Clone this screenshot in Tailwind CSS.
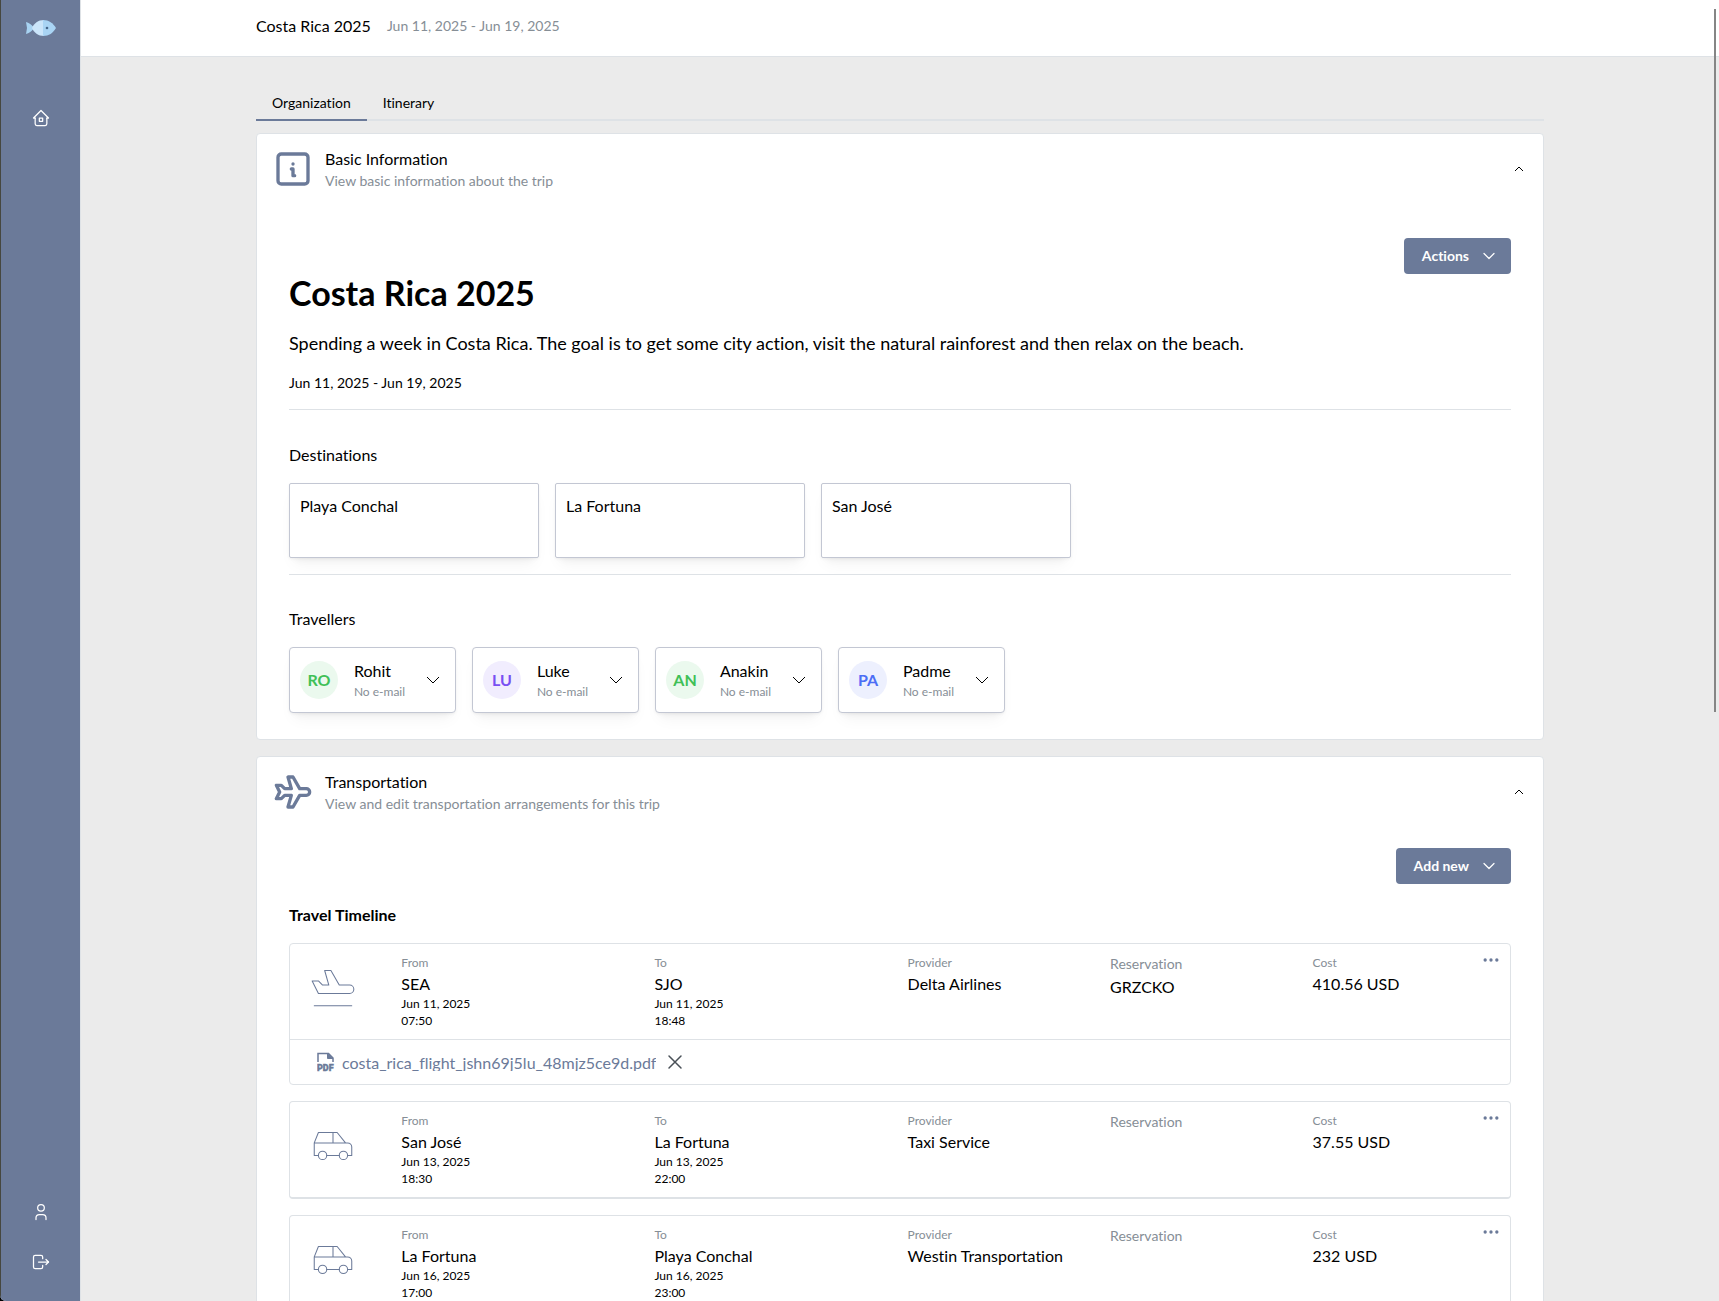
<!DOCTYPE html>
<html lang="en">
<head>
<meta charset="utf-8">
<meta name="viewport" content="width=device-width, initial-scale=1">
<title>Costa Rica 2025</title>
<script src="https://cdn.jsdelivr.net/npm/@tailwindcss/browser@4"></script>
</head>
<body class="bg-black">
<svg class="hidden" aria-hidden="true">
  <symbol id="chevron-down" viewBox="0 0 24 24"><path d="M6 9l6 6l6 -6"/></symbol>
  <symbol id="chevron-up" viewBox="0 0 24 24"><path d="M6 15l6 -6l6 6"/></symbol>
  <symbol id="dots" viewBox="0 0 24 24"><circle cx="5" cy="12" r="1"/><circle cx="12" cy="12" r="1"/><circle cx="19" cy="12" r="1"/></symbol>
  <symbol id="car" viewBox="0 0 24 24"><circle cx="7" cy="17" r="2"/><circle cx="17" cy="17" r="2"/><path d="M5 17h-2v-6l2 -5h9l4 5h1a2 2 0 0 1 2 2v4h-2m-4 0h-6m-6 -6h15m-6 0v-5"/></symbol>
  <symbol id="flight" viewBox="0 0 24 24"><path d="M15 11.085h5a2 2 0 1 1 0 4h-15l-3 -6h3l2 2h3l-2 -7h3l4 7z"/><path d="M3 21h18"/></symbol>
</svg>

<div class="relative flex h-screen overflow-hidden rounded-bl-md bg-[#ebebeb] font-['Lato',sans-serif] text-base leading-6 text-black [font-variant-ligatures:none]">
  <!-- Sidebar -->
  <nav class="flex w-[81px] shrink-0 flex-col items-center border-l border-r border-l-[#46473f] border-r-[#dee2e6] bg-[#6b7a99] text-white">
    <a href="#" aria-label="Travel home" class="mt-4">
      <svg class="h-6 w-8" viewBox="0 0 32 24">
        <path d="M1 6c3 1 5 2 7 4.500v3c-2 2 -4 3.500 -7 4.500l1 -6z" fill="#a8d3f2"/>
        <path d="M7 12c2 -4.500 6 -8 12 -8v16c-6 0 -10 -3.500 -12 -8z" fill="#cbe5fa"/>
        <path d="M18 4c6 0 10 3 13 8c-3 5 -7 8 -13 8z" fill="#a9d4f4"/>
        <circle cx="22" cy="12" r="1.300" fill="#46688c"/>
      </svg>
    </a>
    <a href="#" aria-label="Home" class="mt-[68px]">
      <svg class="size-5 fill-none stroke-current" viewBox="0 0 24 24" stroke-width="1.500" stroke-linecap="round" stroke-linejoin="round"><path d="M5 12H3l9 -9l9 9h-2"/><path d="M5 12v7a2 2 0 0 0 2 2h10a2 2 0 0 0 2 -2v-7"/><path d="M10 12h4v4h-4z"/></svg>
    </a>
    <a href="#" aria-label="Profile" class="mt-auto">
      <svg class="size-5 fill-none stroke-current" viewBox="0 0 24 24" stroke-width="1.500" stroke-linecap="round" stroke-linejoin="round"><circle cx="12" cy="7" r="4"/><path d="M6 21v-2a4 4 0 0 1 4 -4h4a4 4 0 0 1 4 4v2"/></svg>
    </a>
    <a href="#" aria-label="Log out" class="mt-[30px] mb-[29px]">
      <svg class="size-5 fill-none stroke-current" viewBox="0 0 24 24" stroke-width="1.500" stroke-linecap="round" stroke-linejoin="round"><path d="M14 8v-2a2 2 0 0 0 -2 -2h-7a2 2 0 0 0 -2 2v12a2 2 0 0 0 2 2h7a2 2 0 0 0 2 -2v-2"/><path d="M9 12h12l-3 -3"/><path d="M18 15l3 -3"/></svg>
    </a>
  </nav>

  <div class="flex min-w-0 grow flex-col">
    <header class="shrink-0 border-b border-[#dee2e6] bg-white pt-[14px] pb-[18px]">
      <div class="mx-auto flex max-w-[1320px] items-center gap-4 px-4">
        <span>Costa Rica 2025</span>
        <span class="text-sm text-[#868e96]">Jun 11, 2025 - Jun 19, 2025</span>
      </div>
    </header>

    <main class="min-h-0 grow overflow-y-auto [scrollbar-width:none]">
      <div class="mx-auto max-w-[1320px] px-4 pt-7 pb-8">
        <!-- Tabs -->
        <div role="tablist" class="flex text-sm">
          <button role="tab" aria-selected="true" class="border-b-2 border-[#6b7a99] px-4 pt-2 pb-[6px]">Organization</button>
          <button role="tab" aria-selected="false" class="border-b-2 border-[#dee2e6] px-4 pt-2 pb-[6px]">Itinerary</button>
          <span class="grow border-b-2 border-[#dee2e6]"></span>
        </div>

        <!-- Basic information -->
        <section class="mt-3 rounded border border-[#dee2e6] bg-white">
          <button class="flex w-full items-center py-3 pr-4 pl-4 text-left">
            <svg class="size-10 fill-none stroke-[#6b7a99]" viewBox="0 0 24 24" stroke-width="2" stroke-linecap="round" stroke-linejoin="round"><path d="M12 9h.01"/><path d="M3 5a2 2 0 0 1 2 -2h14a2 2 0 0 1 2 2v14a2 2 0 0 1 -2 2h-14a2 2 0 0 1 -2 -2z"/><path d="M11 12h1v4h1"/></svg>
            <span class="ml-3 flex grow flex-col">
              <span class="leading-[25px]">Basic Information</span>
              <span class="text-sm text-[#868e96]">View basic information about the trip</span>
            </span>
            <svg class="size-4 fill-none stroke-black" stroke-width="1.500"><use href="#chevron-up"/></svg>
          </button>

          <div class="px-8 pt-[35px] pb-[26px]">
            <div class="flex items-start justify-between">
              <h1 class="pt-[33px] text-[34px] leading-[44px] font-bold">Costa Rica 2025</h1>
              <button class="flex h-9 items-center gap-[10px] rounded bg-[#6b7a99] pr-3 pl-[18px] text-sm font-bold text-white">Actions
                <svg class="size-5 fill-none stroke-current" stroke-width="1.500" stroke-linecap="round" stroke-linejoin="round"><use href="#chevron-down"/></svg>
              </button>
            </div>
            <p class="mt-[14px] text-lg leading-7">Spending a week in Costa Rica. The goal is to get some city action, visit the natural rainforest and then relax on the beach.</p>
            <p class="mt-4 text-sm">Jun 11, 2025 - Jun 19, 2025</p>
            <hr class="mt-4 border-[#dee2e6]">

            <h2 class="mt-[33px]">Destinations</h2>
            <ul class="mt-4 flex flex-wrap gap-4">
              <li class="h-[75px] w-[250px] rounded-xs border border-[#c3c7d3] bg-white p-[10px] shadow-[0_1px_3px_rgba(0,0,0,0.05),0_10px_15px_-5px_rgba(0,0,0,0.05),0_7px_7px_-5px_rgba(0,0,0,0.04)]">Playa Conchal</li>
              <li class="h-[75px] w-[250px] rounded-xs border border-[#c3c7d3] bg-white p-[10px] shadow-[0_1px_3px_rgba(0,0,0,0.05),0_10px_15px_-5px_rgba(0,0,0,0.05),0_7px_7px_-5px_rgba(0,0,0,0.04)]">La Fortuna</li>
              <li class="h-[75px] w-[250px] rounded-xs border border-[#c3c7d3] bg-white p-[10px] shadow-[0_1px_3px_rgba(0,0,0,0.05),0_10px_15px_-5px_rgba(0,0,0,0.05),0_7px_7px_-5px_rgba(0,0,0,0.04)]">San José</li>
            </ul>
            <hr class="mt-4 border-[#dee2e6]">

            <h2 class="mt-8">Travellers</h2>
            <div class="mt-4 flex flex-wrap gap-4">
              <button class="flex w-[167px] items-center justify-between rounded border border-[#c3c7d3] bg-white px-[10px] py-[11px] text-left shadow-[0_1px_3px_rgba(0,0,0,0.05),0_10px_15px_-5px_rgba(0,0,0,0.05),0_7px_7px_-5px_rgba(0,0,0,0.04)]">
                <span class="flex size-[38px] items-center justify-center rounded-full bg-[#ebf9ee] font-bold text-[#40c057]">RO</span>
                <span class="flex flex-col"><span>Rohit</span><span class="text-xs leading-[18px] text-[#868e96]">No e-mail</span></span>
                <svg class="size-6 fill-none stroke-black" stroke-width="1"><use href="#chevron-down"/></svg>
              </button>
              <button class="flex w-[167px] items-center justify-between rounded border border-[#c3c7d3] bg-white px-[10px] py-[11px] text-left shadow-[0_1px_3px_rgba(0,0,0,0.05),0_10px_15px_-5px_rgba(0,0,0,0.05),0_7px_7px_-5px_rgba(0,0,0,0.04)]">
                <span class="flex size-[38px] items-center justify-center rounded-full bg-[#f1edfe] font-bold text-[#7950f2]">LU</span>
                <span class="flex flex-col"><span>Luke</span><span class="text-xs leading-[18px] text-[#868e96]">No e-mail</span></span>
                <svg class="size-6 fill-none stroke-black" stroke-width="1"><use href="#chevron-down"/></svg>
              </button>
              <button class="flex w-[167px] items-center justify-between rounded border border-[#c3c7d3] bg-white px-[10px] py-[11px] text-left shadow-[0_1px_3px_rgba(0,0,0,0.05),0_10px_15px_-5px_rgba(0,0,0,0.05),0_7px_7px_-5px_rgba(0,0,0,0.04)]">
                <span class="flex size-[38px] items-center justify-center rounded-full bg-[#ebf9ee] font-bold text-[#40c057]">AN</span>
                <span class="flex flex-col"><span>Anakin</span><span class="text-xs leading-[18px] text-[#868e96]">No e-mail</span></span>
                <svg class="size-6 fill-none stroke-black" stroke-width="1"><use href="#chevron-down"/></svg>
              </button>
              <button class="flex w-[167px] items-center justify-between rounded border border-[#c3c7d3] bg-white px-[10px] py-[11px] text-left shadow-[0_1px_3px_rgba(0,0,0,0.05),0_10px_15px_-5px_rgba(0,0,0,0.05),0_7px_7px_-5px_rgba(0,0,0,0.04)]">
                <span class="flex size-[38px] items-center justify-center rounded-full bg-[#edf0fe] font-bold text-[#4c6ef5]">PA</span>
                <span class="flex flex-col"><span>Padme</span><span class="text-xs leading-[18px] text-[#868e96]">No e-mail</span></span>
                <svg class="size-6 fill-none stroke-black" stroke-width="1"><use href="#chevron-down"/></svg>
              </button>
            </div>
          </div>
        </section>

        <!-- Transportation -->
        <section class="mt-4 rounded border border-[#dee2e6] bg-white">
          <button class="flex w-full items-center py-3 pr-4 pl-4 text-left">
            <svg class="size-10 fill-none stroke-[#6b7a99]" viewBox="0 0 24 24" stroke-width="2" stroke-linecap="round" stroke-linejoin="round"><path d="M16 10h4a2 2 0 0 1 0 4h-4l-4 7h-3l2 -7h-4l-2 2h-3l2 -4l-2 -4h3l2 2h4l-2 -7h3z"/></svg>
            <span class="ml-3 flex grow flex-col">
              <span class="leading-[25px]">Transportation</span>
              <span class="text-sm text-[#868e96]">View and edit transportation arrangements for this trip</span>
            </span>
            <svg class="size-4 fill-none stroke-black" stroke-width="1.500"><use href="#chevron-up"/></svg>
          </button>

          <div class="px-8 pt-[22px] pb-8">
            <div class="flex justify-end">
              <button class="flex h-9 items-center gap-[10px] rounded bg-[#6b7a99] pr-3 pl-[18px] text-sm font-bold text-white">Add new
                <svg class="size-5 fill-none stroke-current" stroke-width="1.500" stroke-linecap="round" stroke-linejoin="round"><use href="#chevron-down"/></svg>
              </button>
            </div>
            <h2 class="mt-[19px] font-bold">Travel Timeline</h2>

            <div class="mt-4 flex flex-col gap-4">
              <article class="rounded border border-[#dee2e6]">
                <div class="relative grid grid-cols-[44fr_100fr_100fr_80fr_80fr_78fr] py-[10px]">
                  <svg class="mt-2 ml-[18px] size-[50px] fill-none stroke-[#6b7a99]" stroke-width=".500" stroke-linecap="round" stroke-linejoin="round"><use href="#flight"/></svg>
                  <div>
                    <p class="text-xs leading-[17px] text-[#868e96]">From</p>
                    <p class="leading-[25px]">SEA</p>
                    <p class="text-xs leading-4">Jun 11, 2025</p>
                    <p class="text-xs leading-[17px]">07:50</p>
                  </div>
                  <div>
                    <p class="text-xs leading-[17px] text-[#868e96]">To</p>
                    <p class="leading-[25px]">SJO</p>
                    <p class="text-xs leading-4">Jun 11, 2025</p>
                    <p class="text-xs leading-[17px]">18:48</p>
                  </div>
                  <div>
                    <p class="text-xs leading-[17px] text-[#868e96]">Provider</p>
                    <p class="leading-[25px]">Delta Airlines</p>
                  </div>
                  <div>
                    <p class="text-sm text-[#868e96]">Reservation</p>
                    <p class="leading-[25px]">GRZCKO</p>
                  </div>
                  <div>
                    <p class="text-xs leading-[17px] text-[#868e96]">Cost</p>
                    <p class="leading-[25px]">410.56 USD</p>
                  </div>
                  <button aria-label="More options" class="absolute top-[6px] right-[9px]"><svg class="size-5 fill-[#6b7a99] stroke-[#6b7a99]" stroke-width="2"><use href="#dots"/></svg></button>
                </div>
                <div class="flex h-[45px] items-center border-t border-[#dee2e6] pl-[27px]">
                  <svg class="h-5 w-[18px]" viewBox="0 0 18 20" fill="none" stroke="#6b7a99" stroke-width="1.500">
                    <path d="M1 10V1.500h10.500l4.500 4.500v4"/><path d="M10.500 1.500v5h5.500z" fill="#6b7a99" stroke-width="1"/>
                    <text x="0" y="19" fill="#6b7a99" stroke="#6b7a99" stroke-width=".400" font-family="Roboto, sans-serif" font-weight="900" font-size="9">PDF</text>
                  </svg>
                  <a href="#" class="ml-[7px] h-[18px] overflow-hidden leading-5 text-[#6b7a99]">costa_rica_flight_jshn69j5lu_48mjz5ce9d.pdf</a>
                  <button aria-label="Remove attachment" class="ml-[7px]"><svg class="size-6 fill-none stroke-[#495057]" viewBox="0 0 24 24" stroke-width="1.500" stroke-linecap="round"><path d="M18 6l-12 12M6 6l12 12"/></svg></button>
                </div>
              </article>

              <article class="rounded border border-b-2 border-[#dee2e6]">
                <div class="relative grid grid-cols-[44fr_100fr_100fr_80fr_80fr_78fr] py-[10px]">
                  <svg class="mt-2 ml-[18px] size-[50px] fill-none stroke-[#6b7a99]" stroke-width=".500" stroke-linecap="round" stroke-linejoin="round"><use href="#car"/></svg>
                  <div>
                    <p class="text-xs leading-[17px] text-[#868e96]">From</p>
                    <p class="leading-[25px]">San José</p>
                    <p class="text-xs leading-4">Jun 13, 2025</p>
                    <p class="text-xs leading-[17px]">18:30</p>
                  </div>
                  <div>
                    <p class="text-xs leading-[17px] text-[#868e96]">To</p>
                    <p class="leading-[25px]">La Fortuna</p>
                    <p class="text-xs leading-4">Jun 13, 2025</p>
                    <p class="text-xs leading-[17px]">22:00</p>
                  </div>
                  <div>
                    <p class="text-xs leading-[17px] text-[#868e96]">Provider</p>
                    <p class="leading-[25px]">Taxi Service</p>
                  </div>
                  <div>
                    <p class="text-sm text-[#868e96]">Reservation</p>
                  </div>
                  <div>
                    <p class="text-xs leading-[17px] text-[#868e96]">Cost</p>
                    <p class="leading-[25px]">37.55 USD</p>
                  </div>
                  <button aria-label="More options" class="absolute top-[6px] right-[9px]"><svg class="size-5 fill-[#6b7a99] stroke-[#6b7a99]" stroke-width="2"><use href="#dots"/></svg></button>
                </div>
              </article>

              <article class="rounded border border-b-2 border-[#dee2e6]">
                <div class="relative grid grid-cols-[44fr_100fr_100fr_80fr_80fr_78fr] py-[10px]">
                  <svg class="mt-2 ml-[18px] size-[50px] fill-none stroke-[#6b7a99]" stroke-width=".500" stroke-linecap="round" stroke-linejoin="round"><use href="#car"/></svg>
                  <div>
                    <p class="text-xs leading-[17px] text-[#868e96]">From</p>
                    <p class="leading-[25px]">La Fortuna</p>
                    <p class="text-xs leading-4">Jun 16, 2025</p>
                    <p class="text-xs leading-[17px]">17:00</p>
                  </div>
                  <div>
                    <p class="text-xs leading-[17px] text-[#868e96]">To</p>
                    <p class="leading-[25px]">Playa Conchal</p>
                    <p class="text-xs leading-4">Jun 16, 2025</p>
                    <p class="text-xs leading-[17px]">23:00</p>
                  </div>
                  <div>
                    <p class="text-xs leading-[17px] text-[#868e96]">Provider</p>
                    <p class="leading-[25px]">Westin Transportation</p>
                  </div>
                  <div>
                    <p class="text-sm text-[#868e96]">Reservation</p>
                  </div>
                  <div>
                    <p class="text-xs leading-[17px] text-[#868e96]">Cost</p>
                    <p class="leading-[25px]">232 USD</p>
                  </div>
                  <button aria-label="More options" class="absolute top-[6px] right-[9px]"><svg class="size-5 fill-[#6b7a99] stroke-[#6b7a99]" stroke-width="2"><use href="#dots"/></svg></button>
                </div>
              </article>
            </div>
          </div>
        </section>
      </div>
    </main>
  </div>

  <!-- Scroll thumb -->
  <div class="absolute top-[9px] right-[3px] h-[54%] w-[2px] bg-[#858585]"></div>
</div>
</body>
</html>
